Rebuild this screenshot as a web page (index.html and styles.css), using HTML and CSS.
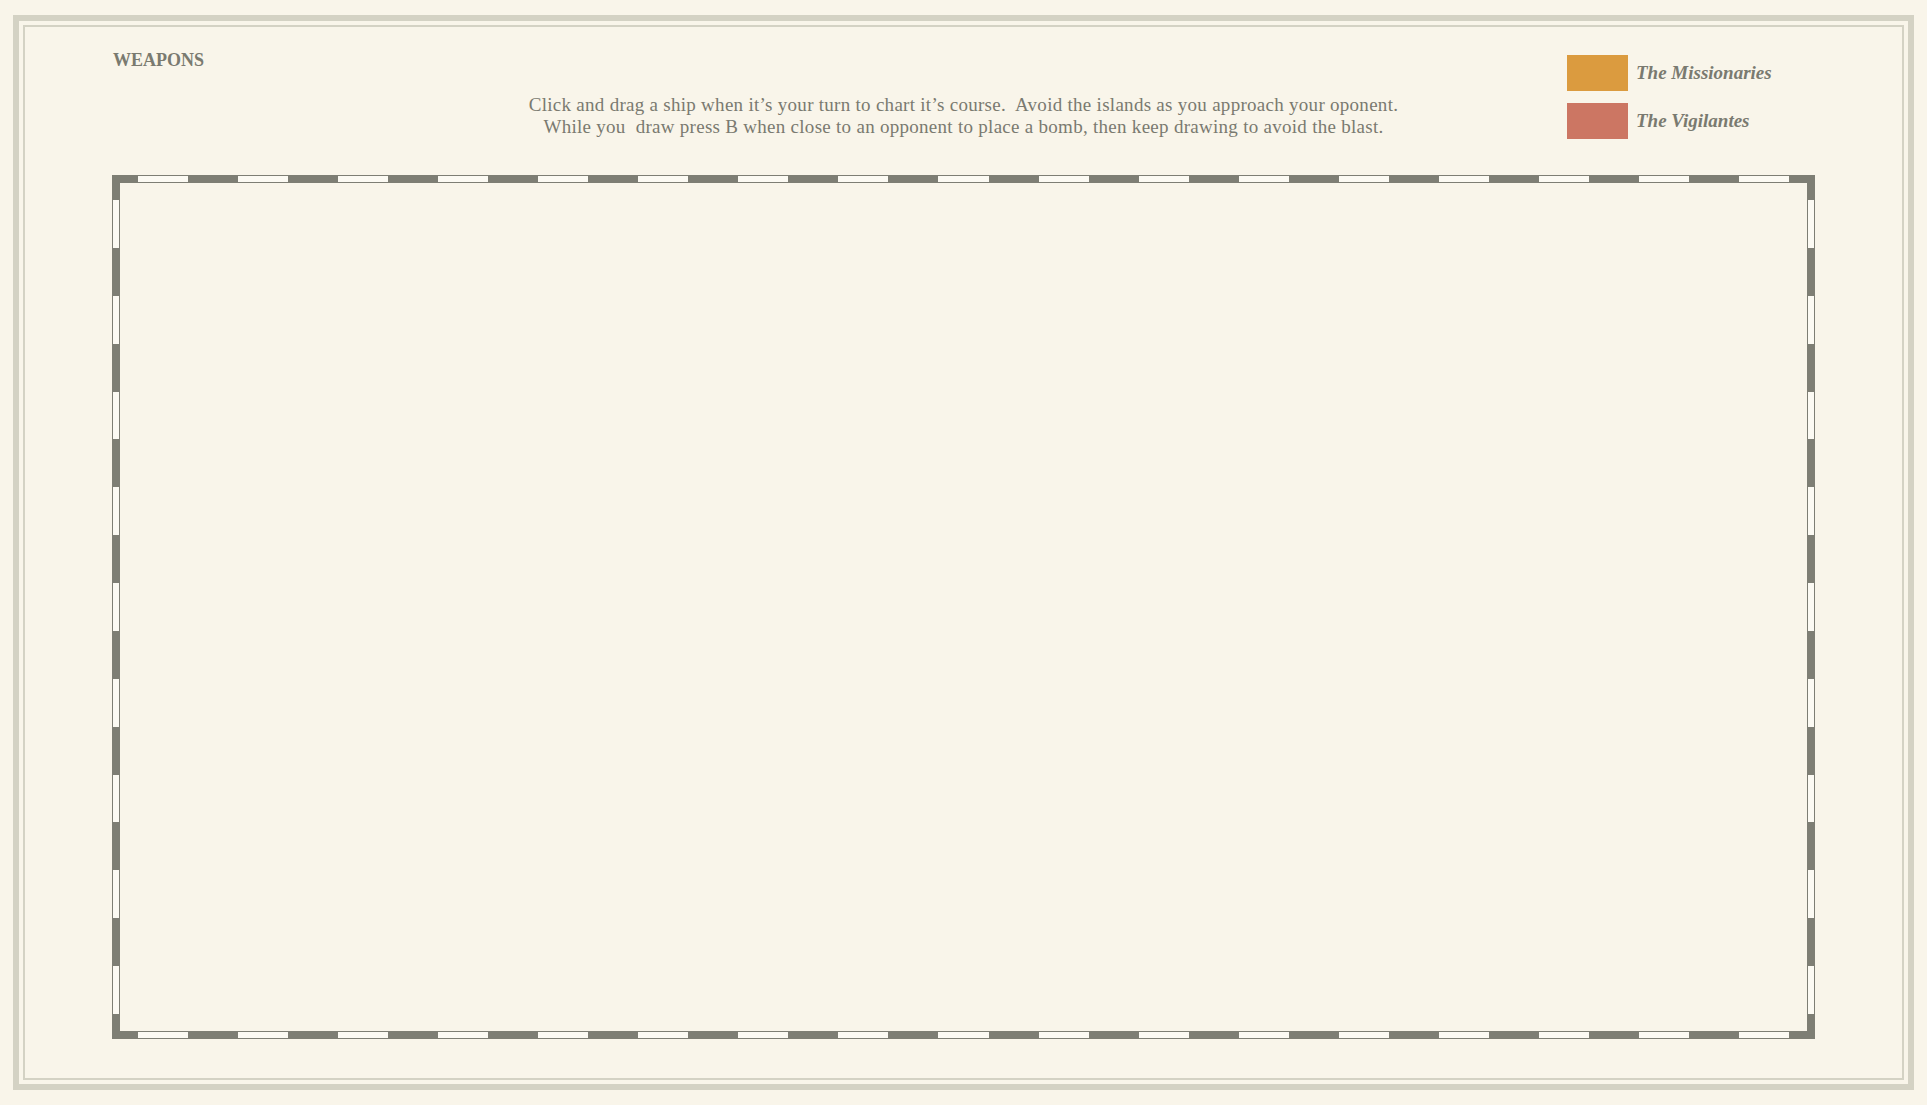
FILE: index.html
```html
<!DOCTYPE html>
<html lang="en">
<head>
<meta charset="utf-8">
<title>Weapons</title>
<link rel="stylesheet" href="styles.css">
</head>
<body>
<div class="frame">
  <div class="inner">
    <header class="header">
      <div class="title">WEAPONS</div>
      <p class="instructions">Click and drag a ship when it’s your turn to chart it’s course.&nbsp; Avoid the islands as you approach your oponent.<br>While you&nbsp; draw press B when close to an opponent to place a bomb, then keep drawing to avoid the blast.</p>
      <ul class="legend">
        <li class="legend-item"><span class="swatch swatch-missionaries"></span><span class="team">The Missionaries</span></li>
        <li class="legend-item"><span class="swatch swatch-vigilantes"></span><span class="team">The Vigilantes</span></li>
      </ul>
    </header>
    <main class="board">
      <div class="sea"></div>
    </main>
  </div>
</div>
</body>
</html>
```

FILE: styles.css
```css
* { box-sizing: border-box; }

html, body {
  margin: 0;
  padding: 0;
  background: #f9f5ea;
  height: 100%;
}

body {
  font-family: "Liberation Serif", "Times New Roman", serif;
  color: #7a7a70;
}

.frame {
  margin: 15px 13px;
  height: calc(100vh - 30px);
  border: 6px solid #d4d2c4;
  padding: 4px;
}

.inner {
  height: 100%;
  border: 2px solid #d4d2c4;
  padding: 23px 87px 39px;
  display: flex;
  flex-direction: column;
}

.header {
  height: 125px;
  flex: none;
  display: grid;
  grid-template-columns: 1fr auto 1fr;
  align-items: start;
}

.title {
  font-size: 18px;
  line-height: 20px;
  font-weight: bold;
  padding-left: 1px;
}

.instructions {
  margin: 44px 0 0;
  font-size: 19px;
  letter-spacing: 0.28px;
  line-height: 21.5px;
  text-align: center;
  white-space: nowrap;
}

.legend {
  list-style: none;
  margin: 5px 43px 0 0;
  padding: 0;
  width: 205px;
  justify-self: end;
  display: flex;
  flex-direction: column;
  gap: 12px;
}

.legend-item {
  display: flex;
  align-items: center;
  gap: 8px;
  height: 36px;
}

.swatch {
  width: 61px;
  height: 36px;
  flex: none;
}

.swatch-missionaries { background: #db9b3f; }
.swatch-vigilantes { background: #cc7663; }

.team {
  font-size: 19px;
  font-weight: bold;
  font-style: italic;
}

.board {
  flex: 1;
  padding: 8px;
  background:
    repeating-linear-gradient(90deg, #fcfaf3 0 calc(100% / 33), transparent calc(100% / 33) calc(200% / 33)) left 26px top 1px / calc(100% - 52px) 6px no-repeat,
    repeating-linear-gradient(90deg, #fcfaf3 0 calc(100% / 33), transparent calc(100% / 33) calc(200% / 33)) left 26px bottom 1px / calc(100% - 52px) 6px no-repeat,
    repeating-linear-gradient(180deg, #fcfaf3 0 calc(100% / 17), transparent calc(100% / 17) calc(200% / 17)) left 1px top 25px / 6px calc(100% - 50px) no-repeat,
    repeating-linear-gradient(180deg, #fcfaf3 0 calc(100% / 17), transparent calc(100% / 17) calc(200% / 17)) right 1px top 25px / 6px calc(100% - 50px) no-repeat,
    #7e7e74;
  display: flex;
}

.sea {
  flex: 1;
  background: #f9f5ea;
}
```
